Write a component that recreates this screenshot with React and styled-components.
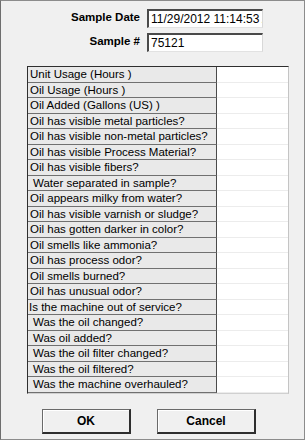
import styled, {createGlobalStyle} from 'styled-components';

const GlobalStyle = createGlobalStyle`
  html, body {
    margin: 0;
    padding: 0;
    background: #f0f0f0;
  }
  body {
    font-family: "Liberation Sans", Arial, sans-serif;
  }
`;

const ROWS = [
    {text: 'Unit Usage (Hours )'},
    {text: 'Oil Usage (Hours )'},
    {text: 'Oil Added (Gallons (US) )'},
    {text: 'Oil has visible metal particles?'},
    {text: 'Oil has visible non-metal particles?'},
    {text: 'Oil has visible Process Material?'},
    {text: 'Oil has visible fibers?'},
    {text: 'Water separated in sample?', indent: true},
    {text: 'Oil appears milky from water?'},
    {text: 'Oil has visible varnish or sludge?'},
    {text: 'Oil has gotten darker in color?'},
    {text: 'Oil smells like ammonia?'},
    {text: 'Oil has process odor?'},
    {text: 'Oil smells burned?'},
    {text: 'Oil has unusual odor?'},
    {text: 'Is the machine out of service?', tight: true},
    {text: 'Was the oil changed?', indent: true},
    {text: 'Was oil added?', indent: true},
    {text: 'Was the oil filter changed?', indent: true},
    {text: 'Was the oil filtered?', indent: true},
    {text: 'Was the machine overhauled?', indent: true},
];

export default function App() {
    return (
        <>
            <GlobalStyle/>
            <Dialog>
                <Header>
                    <FieldLabel>Sample Date</FieldLabel>
                    <Field>11/29/2012 11:14:53 AM</Field>
                    <FieldLabel>Sample #</FieldLabel>
                    <Field>75121</Field>
                </Header>
                <Grid>
                    {ROWS.map((row, i) => (
                        <Row key={i}>
                            <LabelCell $indent={row.indent} $tight={row.tight}>{row.text}</LabelCell>
                            <ValueCell/>
                        </Row>
                    ))}
                </Grid>
                <Buttons>
                    <Button $width={89}>OK</Button>
                    <Button $width={99}>Cancel</Button>
                </Buttons>
            </Dialog>
        </>
    );
}

const Dialog = styled.div`
  width: 305px;
  height: 440px;
  box-sizing: border-box;
  border: 1px solid #8c8c8c;
  border-left-color: #6e6e6e;
  background: #f0f0f0;
  display: flex;
  flex-direction: column;
  font-size: 11.5px;
  color: #000;
`;

const Header = styled.div`
  display: grid;
  grid-template-columns: 139px 116px;
  column-gap: 7px;
  row-gap: 5px;
  align-items: center;
  padding-top: 8px;
`;

const FieldLabel = styled.div`
  text-align: right;
  font-weight: bold;
  font-size: 11.5px;
  position: relative;
  top: -2px;
`;

const Field = styled.div`
  height: 19px;
  box-sizing: border-box;
  background: #fff;
  border-top: 2px solid #4a4a4a;
  border-left: 2px solid #4a4a4a;
  border-right: 1px solid #d8d8d8;
  border-bottom: 1px solid #e2e2e2;
  padding: 1px 0 0 2px;
  font-size: 12px;
  line-height: 14px;
  white-space: nowrap;
  overflow: hidden;
`;

const Grid = styled.div`
  margin: 14px 0 0 26px;
  width: 262px;
  box-sizing: border-box;
  border-top: 1px solid #2f2f2f;
  border-left: 1px solid #2f2f2f;
  border-right: 1px solid #c4c4c4;
  border-bottom: 1px solid #d0d0d0;
  display: flex;
  flex-direction: column;
`;

const Row = styled.div`
  display: grid;
  grid-template-columns: 189px 1fr;
  height: 15.5px;
  box-sizing: border-box;
`;

const LabelCell = styled.div`
  background: #e9e9e9;
  border-right: 1px solid #4a4a4a;
  border-bottom: 1px solid #707070;
  padding-left: ${p => p.$indent ? '5px' : p.$tight ? '1px' : '2px'};
  font-size: 11.5px;
  line-height: 14px;
  white-space: nowrap;
  overflow: hidden;
`;

const ValueCell = styled.div`
  background: #fff;
  border-bottom: 1px solid #ececec;
`;

const Buttons = styled.div`
  display: flex;
  gap: 26px;
  padding-left: 41px;
  margin-top: 15px;
`;

const Button = styled.button`
  width: ${p => p.$width}px;
  height: 25px;
  box-sizing: border-box;
  background: #f0f0f0;
  border: 1px solid #6a6a6a;
  border-right: 2px solid #2e2e2e;
  border-bottom: 2px solid #2e2e2e;
  box-shadow: inset 1px 1px #ffffff;
  font-family: "Liberation Sans", Arial, sans-serif;
  font-weight: bold;
  font-size: 12px;
  color: #000;
  padding: 0;
`;
